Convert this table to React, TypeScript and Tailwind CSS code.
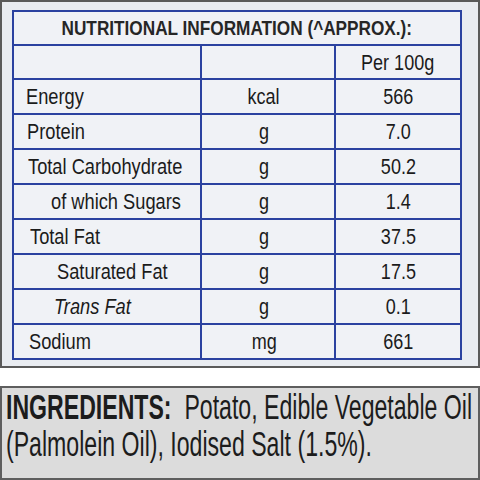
import React from 'react';

const rows = [
  { label: 'Energy', unit: 'kcal', value: '566', indent: 'pl-[12px]' },
  { label: 'Protein', unit: 'g', value: '7.0', indent: 'pl-[13px]' },
  { label: 'Total Carbohydrate', unit: 'g', value: '50.2', indent: 'pl-[14px]' },
  { label: 'of which Sugars', unit: 'g', value: '1.4', indent: 'pl-[37px]' },
  { label: 'Total Fat', unit: 'g', value: '37.5', indent: 'pl-[16px]' },
  { label: 'Saturated Fat', unit: 'g', value: '17.5', indent: 'pl-[43px]' },
  { label: 'Trans Fat', unit: 'g', value: '0.1', indent: 'pl-[40px]', italic: true },
  { label: 'Sodium', unit: 'mg', value: '661', indent: 'pl-[15px]' },
];

// condensed print type: Arial widths squeezed horizontally
const Squeeze = ({ children, className = '' }: { children: React.ReactNode; className?: string }) => (
  <span className={`inline-block whitespace-nowrap ${className}`}>{children}</span>
);

const App: React.FC = () => {
  return (
    <div className="w-[480px] h-[480px] bg-white flex flex-col font-['Liberation_Sans',Arial,sans-serif] text-[#1b1b1b]">
      {/* nutrition panel */}
      <div className="h-[368px] border-2 border-[#5a5a5a] bg-[#e9ecf1] pl-[10px] pt-[8px]">
        <div className="w-[450px] border-2 border-[#2b42a0] bg-[#f0f2f6]">
          <div className="h-[34px] border-b-2 border-[#2b42a0] flex items-center justify-center text-[#262626]">
            <Squeeze className="font-bold text-[20px] scale-x-[0.86]">NUTRITIONAL INFORMATION (^APPROX.):</Squeeze>
          </div>
          <div className="grid grid-cols-[186px_134px_1fr]">
            <div className="h-[34px] border-b-2 border-[#2b42a0]" />
            <div className="h-[34px] border-b-2 border-l-2 border-[#2b42a0]" />
            <div className="h-[34px] border-b-2 border-l-2 border-[#2b42a0] flex items-center justify-center">
              <Squeeze className="text-[22px] scale-x-[0.82]">Per 100g</Squeeze>
            </div>
            {rows.map((r, i) => {
              const last = i === rows.length - 1;
              const b = last ? 'h-[33px]' : 'h-[35px] border-b-2';
              return (
                <React.Fragment key={r.label}>
                  <div className={`${b} border-[#2b42a0] flex items-center ${r.indent}`}>
                    <Squeeze className={`text-[22px] scale-x-[0.83] origin-left ${r.italic ? 'italic' : ''}`}>{r.label}</Squeeze>
                  </div>
                  <div className={`${b} border-l-2 border-[#2b42a0] flex items-center justify-center pr-[8px]`}>
                    <Squeeze className="text-[22px] scale-x-[0.82]">{r.unit}</Squeeze>
                  </div>
                  <div className={`${b} border-l-2 border-[#2b42a0] flex items-center justify-center`}>
                    <Squeeze className="text-[22px] scale-x-[0.82]">{r.value}</Squeeze>
                  </div>
                </React.Fragment>
              );
            })}
          </div>
        </div>
      </div>

      <div className="h-[18px] bg-white" />

      {/* ingredients panel */}
      <div className="flex-1 border-2 border-[#5e5e5e] bg-[#dcdcdc] pl-[4px] text-[35px] leading-[37px] text-[#1c1c1c] overflow-hidden">
        <div>
          <Squeeze className="scale-x-[0.66] origin-left">
            <span className="font-bold">INGREDIENTS:</span>&nbsp; Potato, Edible Vegetable Oil
          </Squeeze>
        </div>
        <div>
          <Squeeze className="scale-x-[0.66] origin-left">(Palmolein Oil), Iodised Salt (1.5%).</Squeeze>
        </div>
      </div>
    </div>
  );
};

export default App;
